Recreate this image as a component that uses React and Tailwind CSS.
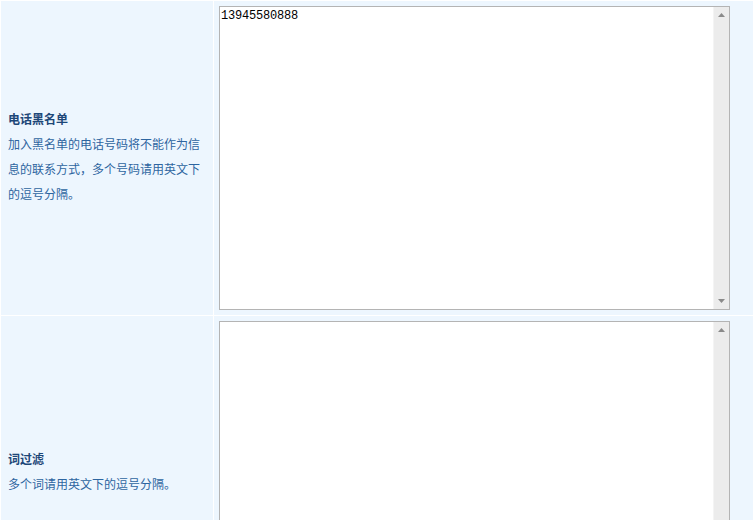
import { useState } from 'react'

const rows = [
  {
    title: '电话黑名单',
    desc: '加入黑名单的电话号码将不能作为信息的联系方式，多个号码请用英文下的逗号分隔。',
    value: '13945580888',
  },
  {
    title: '词过滤',
    desc: '多个词请用英文下的逗号分隔。',
    value: '',
  },
]

function FakeTextarea({ initial }) {
  const [text, setText] = useState(initial)
  return (
    <div className="flex h-[304px] w-[511px] border border-[#b4b4b4] bg-white">
      <textarea
        value={text}
        onChange={(e) => setText(e.target.value)}
        className="flex-1 resize-none overflow-hidden bg-white px-[1px] pt-[2px] pb-0 font-['Liberation_Mono',monospace] text-[12px] leading-[14px] tracking-[-0.2px] text-black outline-none"
      />
      <div className="flex w-[16px] flex-col items-center justify-between border-l border-[#f4f4f4] bg-[#ececec] py-[6px]">
        <svg width="7" height="4" viewBox="0 0 7 4">
          <path d="M3.5 0 L7 4 L0 4 Z" fill="#8a8a8a" />
        </svg>
        <svg width="7" height="4" viewBox="0 0 7 4">
          <path d="M0 0 L7 0 L3.5 4 Z" fill="#8a8a8a" />
        </svg>
      </div>
    </div>
  )
}

export default function App() {
  return (
    <div className="h-[520px] w-[753px] overflow-hidden bg-white pl-px pt-px font-['Noto_Sans_CJK_SC',sans-serif] text-[12px]">
      <div className="flex flex-col gap-px">
        {rows.map((r) => (
          <div key={r.title} className="flex gap-px">
            <div className="flex w-[212px] shrink-0 flex-col justify-center bg-[#edf6fe] pb-[4px] pl-[7px] pr-[8px] leading-[25px]">
              <div className="font-bold text-[#1d4778]">{r.title}</div>
              <div className="text-[#2d65a0]">{r.desc}</div>
            </div>
            <div className="flex-1 bg-[#edf6fe] py-[5px] pl-[5px]">
              <FakeTextarea initial={r.value} />
            </div>
          </div>
        ))}
      </div>
    </div>
  )
}
